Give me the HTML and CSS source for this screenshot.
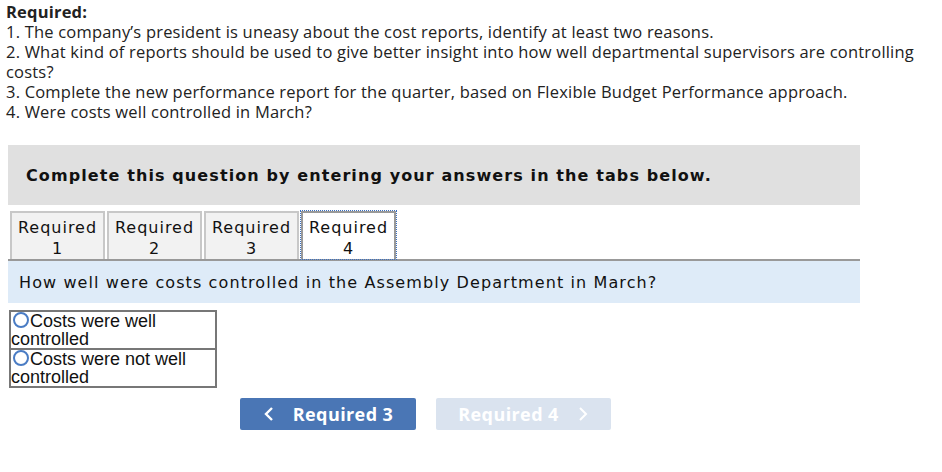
FILE: index.html
```html
<!DOCTYPE html>
<html>
<head>
<meta charset="utf-8">
<link rel="stylesheet" href="styles.css">
</head>
<body>
<div class="req">
  <div class="req-title">Required:</div>
  <div>1. The company’s president is uneasy about the cost reports, identify at least two reasons.</div>
  <div>2. What kind of reports should be used to give better insight into how well departmental supervisors are controlling costs?</div>
  <div>3. Complete the new performance report for the quarter, based on Flexible Budget Performance approach.</div>
  <div>4. Were costs well controlled in March?</div>
</div>
<div class="banner">Complete this question by entering your answers in the tabs below.</div>
<div class="tabs">
  <div class="tab">Required<br>1</div>
  <div class="tab">Required<br>2</div>
  <div class="tab">Required<br>3</div>
  <div class="tab active">Required<br>4</div>
</div>
<div class="question">How well were costs controlled in the Assembly Department in March?</div>
<div class="options">
  <div class="opt"><span class="radio"></span>Costs were well controlled</div>
  <div class="opt"><span class="radio"></span>Costs were not well controlled</div>
</div>
<div class="nav">
  <div class="btn prev"><svg width="12" height="16" viewBox="0 0 12 16"><path d="M9 2 L3 8 L9 14" fill="none" stroke="#fff" stroke-width="2.4"/></svg><span>Required 3</span></div>
  <div class="btn next"><span>Required 4</span><svg width="12" height="16" viewBox="0 0 12 16"><path d="M3 2 L9 8 L3 14" fill="none" stroke="#fff" stroke-width="2"/></svg></div>
</div>
</body>
</html>
```
FILE: styles.css
```css
body {
  margin: 0;
  background: #fff;
  font-family: "Open Sans", "Liberation Sans", sans-serif;
  color: #222;
}
.req {
  padding: 2px 0 0 6px;
  font-size: 16.5px;
  letter-spacing: 0.2px;
  line-height: 20px;
  width: 908px;
}
.req-title {
  font-weight: bold;
}
.banner {
  margin: 23px 82px 0 8px;
  height: 60px;
  background: #e0e0e0;
  font-family: "DejaVu Sans", Verdana, sans-serif;
  font-weight: bold;
  font-size: 16px;
  letter-spacing: 1.1px;
  color: #111;
  display: flex;
  align-items: center;
  padding-left: 18px;
  box-sizing: border-box;
}
.tabs {
  display: flex;
  gap: 2px;
  margin: 6px 82px 0 8px;
  padding-left: 2px;
  border-bottom: 2px solid #999;
}
.tab {
  width: 95px;
  height: 48px;
  box-sizing: border-box;
  border: 2px solid #c8c8c8;
  border-bottom: none;
  background: #f2f2f2;
  font-family: "DejaVu Sans", Verdana, sans-serif;
  font-size: 16px;
  letter-spacing: 1px;
  line-height: 21px;
  text-align: center;
  color: #111;
  padding-top: 4px;
}
.tab.active {
  background: #fff;
  border: 2px solid #999;
  border-bottom: none;
  outline: 1px dotted #3a6fc0;
  outline-offset: 0;
}
.question {
  margin: 0 82px 0 8px;
  height: 42px;
  background: #deebf8;
  font-family: "DejaVu Sans", Verdana, sans-serif;
  font-size: 16px;
  letter-spacing: 1.1px;
  color: #111;
  display: flex;
  align-items: center;
  padding-left: 11px;
}
.options {
  margin: 7px 0 0 9px;
  width: 208px;
  box-sizing: border-box;
  border: 2px solid #777;
}
.opt {
  font-family: "Liberation Sans", Arial, sans-serif;
  font-size: 18px;
  line-height: 18px;
  color: #111;
}
.opt + .opt {
  border-top: 2px solid #777;
}
.radio {
  display: inline-block;
  width: 12px;
  height: 12px;
  border: 2px solid #4a7cc4;
  border-radius: 50%;
  vertical-align: -1px;
  margin: 0 1px 0 2px;
}
.nav {
  display: flex;
  gap: 20px;
  margin: 10px 0 0 240px;
}
.btn {
  width: 176px;
  height: 32px;
  border-radius: 2px;
  display: flex;
  align-items: center;
  justify-content: center;
  gap: 18px;
  font-family: "Open Sans", "Liberation Sans", sans-serif;
  font-weight: bold;
  font-size: 18px;
  letter-spacing: 0.4px;
  color: #fff;
}
.prev {
  background: #4a76b5;
}
.next {
  width: 175px;
  background: #dae3ef;
}
```
